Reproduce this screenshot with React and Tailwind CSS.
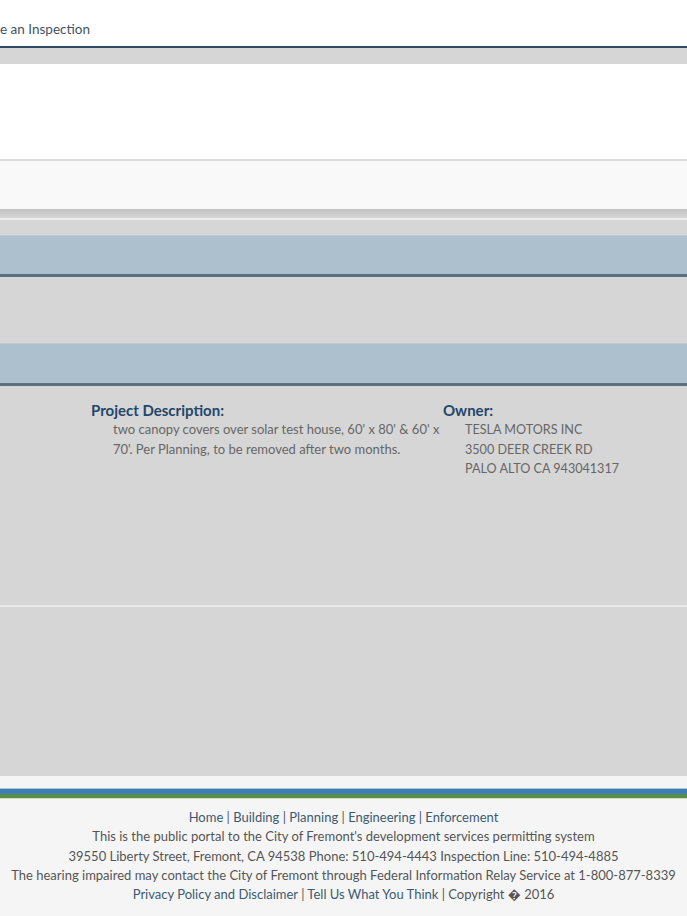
import React from 'react';

const footerLinks = ['Home', 'Building', 'Planning', 'Engineering', 'Enforcement'];

const Divider = () => <span className="text-[#555]"> | </span>;

const App = () => {
  return (
    <div className="w-[687px] min-h-[916px] overflow-hidden bg-[#f5f5f5] font-['Lato','Open_Sans',sans-serif]">
      {/* top nav */}
      <div className="h-[46px] bg-white pt-[19px]">
        <span className="block whitespace-nowrap text-[13.5px] leading-[20px] text-[#3f5364]">e an Inspection</span>
      </div>
      <div className="h-[2px] bg-[#2e4b66]" />
      <div className="h-[16px] bg-[#d6d6d6]" />

      {/* white panel */}
      <div className="h-[95px] bg-white" />
      <div className="h-[2px] bg-[#dcdcdc]" />
      <div className="h-[48px] bg-[#f9f9f9]" />
      <div className="h-[9px] bg-gradient-to-b from-[#c2c2c2] to-[#d6d6d6]" />
      <div className="h-[2px] bg-[#ededed]" />
      <div className="h-[15px] bg-[#d6d6d6]" />

      {/* section bar 1 */}
      <div className="h-[42px] bg-[#adc0ce] border-t border-[#bccbd6] border-b-[3px] border-b-[#5b6f7e]" />
      <div className="h-[66px] bg-[#d6d6d6]" />

      {/* section bar 2 */}
      <div className="h-[43px] bg-[#adc0ce] border-t border-[#bccbd6] border-b-[3px] border-b-[#5b6f7e]" />

      {/* details */}
      <div className="h-[219px] bg-[#d6d6d6] flex pt-[15px]">
        <div className="ml-[91px] w-[352px]">
          <div className="text-[15px] font-bold text-[#23466b] leading-[18px]">Project Description:</div>
          <div className="ml-[22px] mt-[1px] w-[328px] text-[13px] leading-[19.5px] text-[#666]">
            two canopy covers over solar test house, 60' x 80' &amp; 60' x 70'. Per Planning, to be removed after two months.
          </div>
        </div>
        <div>
          <div className="text-[15px] font-bold text-[#23466b] leading-[18px]">Owner:</div>
          <div className="ml-[22px] mt-[1px] text-[12.6px] leading-[19.5px] text-[#666]">
            <div>TESLA MOTORS INC</div>
            <div>3500 DEER CREEK RD</div>
            <div>PALO ALTO CA 943041317</div>
          </div>
        </div>
      </div>
      <div className="h-[2px] bg-[#e9e9e9]" />
      <div className="h-[169px] bg-[#d6d6d6]" />

      {/* footer */}
      <div className="h-[12px] bg-[#f5f5f5]" />
      <div className="h-[1px] bg-[#a9c4dc]" />
      <div className="h-[5px] bg-[#3f7db5]" />
      <div className="h-[4px] bg-[#5a8c48]" />
      <div className="h-[1px] bg-[#c9dfc0]" />

      <div className="pt-[9px] text-center text-[13px] leading-[19.3px] text-[#555] whitespace-nowrap">
        <div>
          {footerLinks.map((l, i) => (
            <React.Fragment key={l}>
              {i > 0 && <Divider />}
              <a className="text-[#3c5a72]">{l}</a>
            </React.Fragment>
          ))}
        </div>
        <div>This is the public portal to the City of Fremont's development services permitting system</div>
        <div>39550 Liberty Street, Fremont, CA 94538 Phone: 510-494-4443 Inspection Line: 510-494-4885</div>
        <div>The hearing impaired may contact the City of Fremont through Federal Information Relay Service at 1-800-877-8339</div>
        <div>
          <a className="text-[#3c5a72]">Privacy Policy and Disclaimer</a>
          <Divider />
          <a className="text-[#3c5a72]">Tell Us What You Think</a>
          <Divider />
          <span>Copyright � 2016</span>
        </div>
      </div>
    </div>
  );
};

export default App;
